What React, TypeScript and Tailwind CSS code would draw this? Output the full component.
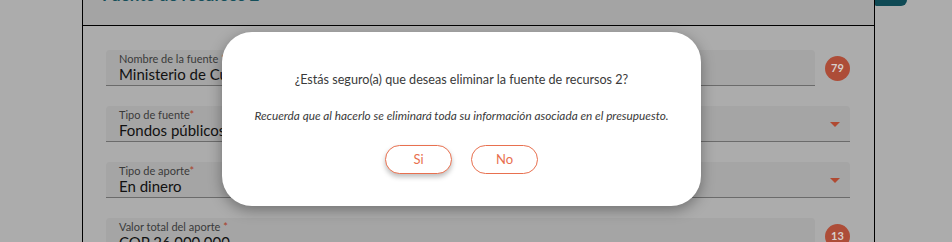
import React from "react";

function Caret() {
  return (
    <svg width="10" height="6" viewBox="0 0 10 6" className="shrink-0">
      <path d="M0 0 L10 0 L5 5 Z" fill="#b04a32" />
    </svg>
  );
}

function Field({ label, value, select, badge }: { label: string; value: string; select?: boolean; badge?: string }) {
  return (
    <div className="flex items-center">
      <div className={`flex h-[36px] items-center rounded-t-[4px] border-b border-[#6b6b6b] bg-[#a5a5a5] pl-[13px] pr-[8px] ${select ? "w-[744px]" : "w-[709px]"}`}>
        <div className="flex flex-1 flex-col leading-none">
          <div className="text-[11px] leading-[13px] text-[#3a3a3a]">
            {label}
            <span className="text-[#a8402a]">*</span>
          </div>
          <div className="text-[15px] leading-[18px] text-[#111]">{value}</div>
        </div>
        {select && <div className="mr-[2px] mt-[2px]"><Caret /></div>}
      </div>
      {badge && (
        <div className="ml-[10px] flex h-[25px] w-[25px] items-center justify-center rounded-full bg-[#ad4d38] text-[11px] font-bold text-[#d8d0cc]">
          {badge}
        </div>
      )}
    </div>
  );
}

export default function App() {
  return (
    <div className="relative h-[242px] w-[952px] overflow-hidden bg-[#acacac]" style={{ fontFamily: "Lato, 'Open Sans', sans-serif" }}>
      <div className="relative ml-[82px] h-full w-[793px] border-x border-black">
        <div className="flex h-[26px] items-start overflow-hidden border-b border-black bg-[#a4a4a4] pl-[19px]">
          <div className="relative -top-[15px] text-[17px] font-bold leading-[20px] text-[#154f5a]">Fuente de recursos 2</div>
        </div>
        <div className="flex flex-col gap-[20px] pl-[23px] pt-[24px]">
          <Field label="Nombre de la fuente " value="Ministerio de Cultura" badge="79" />
          <Field label="Tipo de fuente" value="Fondos públicos" select />
          <Field label="Tipo de aporte" value="En dinero" select />
          <Field label="Valor total del aporte " value="COP 26.000.000" badge="13" />
        </div>
      </div>
      <div className="absolute left-[875px] top-0 h-[6px] w-[32px] rounded-br-[8px] rounded-bl-[2px] bg-[#0f4a55]" />
      <div className="absolute left-[222px] top-[32px] flex h-[174px] w-[479px] flex-col items-center rounded-[30px] bg-white shadow-[0_4px_14px_rgba(0,0,0,0.35)]">
        <div className="mt-[40px] text-[12.6px] leading-[16px] text-[#3a3a3a]">¿Estás seguro(a) que deseas eliminar la fuente de recursos 2?</div>
        <div className="mt-[20px] text-[11.8px] italic leading-[16px] text-[#3a3a3a]">Recuerda que al hacerlo se eliminará toda su información asociada en el presupuesto.</div>
        <div className="mt-[21px] flex gap-[19px]">
          <button className="h-[29px] w-[67px] rounded-full border border-[#e8704f] bg-white text-[13px] text-[#e8704f] shadow-[0_3px_5px_rgba(0,0,0,0.25)]">Si</button>
          <button className="h-[29px] w-[67px] rounded-full border border-[#e8704f] bg-white text-[13px] text-[#e8704f]">No</button>
        </div>
      </div>
    </div>
  );
}
